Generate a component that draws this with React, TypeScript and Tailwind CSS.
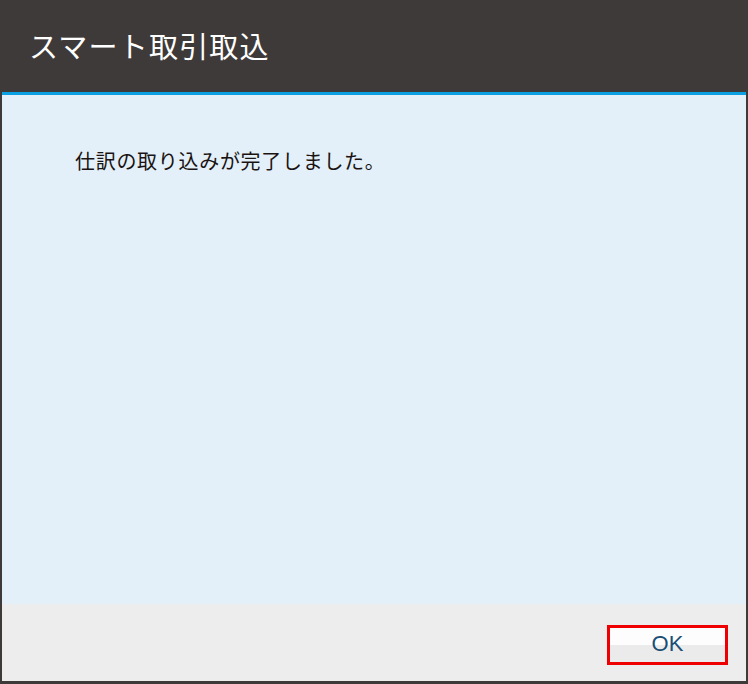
export default function App() {
    return (
        <div className="w-[748px] h-[684px] bg-[#3e3a39] flex flex-col" style={{ fontFamily: '"Noto Sans CJK JP", "Noto Sans", sans-serif' }}>
            {/* --- HEADER --- */}
            <div className="h-[92px] flex items-center pl-[29px] pb-[2px]">
                <h1 className="text-[29px] text-white leading-none tracking-[1.2px]">スマート取引取込</h1>
            </div>

            {/* --- DIALOG BODY --- */}
            <div className="flex-1 flex flex-col px-[2px] pb-[3px]">
                <div className="flex-1 bg-[#e3f0f9] border-t-[3px] border-[#0aa0e2] pl-[73px] pt-[51px]">
                    <p className="text-[20px] leading-[30px] tracking-[0.7px] text-[#1a1311]">仕訳の取り込みが完了しました。</p>
                </div>

                {/* --- FOOTER --- */}
                <div className="h-[77px] bg-[#ededed] flex justify-end items-start pt-[21px] pr-[18px]">
                    <button className="w-[121px] h-[40px] pb-[2px] border-[3px] border-[#ee0000] bg-gradient-to-b from-[#fdfdfd] from-50% to-[#ebebeb] to-50% flex items-center justify-center text-[22px] leading-none text-[#1a4e74]" style={{ fontFamily: '"Liberation Sans", Arial, sans-serif' }}>
                        OK
                    </button>
                </div>
            </div>
        </div>
    );
}
